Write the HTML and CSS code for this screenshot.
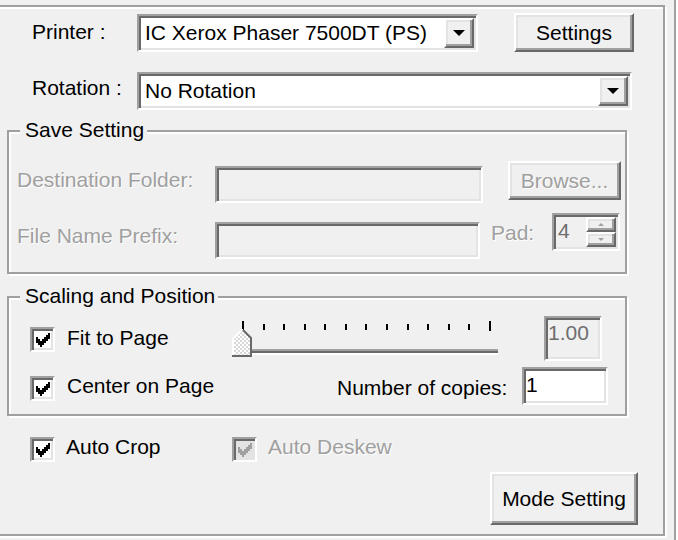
FILE: index.html
```html
<!DOCTYPE html>
<html lang="en">
<head>
  <meta charset="UTF-8" />
  <title>Print Setup</title>
  <link rel="stylesheet" href="styles.css">
</head>
<body>
  <div class="screen">
    <div class="frame">

      <div class="row row-printer">
        <span class="label lbl-printer">Printer :</span>
        <div class="combo combo-printer">
          <span class="combo-text">IC Xerox Phaser 7500DT (PS)</span>
          <span class="combo-btn"><i class="arrow"></i></span>
        </div>
        <button class="btn btn-settings">Settings</button>
      </div>

      <div class="row row-rotation">
        <span class="label lbl-rotation">Rotation :</span>
        <div class="combo combo-rotation">
          <span class="combo-text">No Rotation</span>
          <span class="combo-btn"><i class="arrow"></i></span>
        </div>
      </div>

      <div class="group group-save">
        <div class="group-title">Save Setting</div>
        <div class="row row-dest">
          <span class="label off lbl-dest">Destination Folder:</span>
          <div class="edit edit-dest"></div>
          <button class="btn btn-browse off">Browse...</button>
        </div>
        <div class="row row-prefix">
          <span class="label off lbl-prefix">File Name Prefix:</span>
          <div class="edit edit-prefix"></div>
          <span class="label off lbl-pad">Pad:</span>
          <div class="spin">
            <span class="spin-value">4</span>
            <span class="spin-btns">
              <span class="spin-btn"><i class="tri-up"></i></span>
              <span class="spin-btn"><i class="tri-down"></i></span>
            </span>
          </div>
        </div>
      </div>

      <div class="group group-scale">
        <div class="group-title">Scaling and Position</div>
        <div class="row row-fit">
          <div class="check check-fit">
            <span class="cb"><svg width="14" height="14" viewBox="0 0 7 7" shape-rendering="crispEdges"><path d="M0 2h1v3H0zM1 3h1v3H1zM2 4h1v3H2zM3 3h1v3H3zM4 2h1v3H4zM5 1h1v3H5zM6 0h1v3H6z" fill="#000"/></svg></span>
            <span class="label">Fit to Page</span>
          </div>
          <svg class="slider" width="272" height="42" viewBox="0 0 272 42" shape-rendering="crispEdges">
            <defs>
              <pattern id="dither" width="4" height="4" patternUnits="userSpaceOnUse">
                <rect width="4" height="4" fill="#ffffff"/>
                <rect width="2" height="2" fill="#d8d8d8"/>
                <rect x="2" y="2" width="2" height="2" fill="#d8d8d8"/>
              </pattern>
            </defs>
            <g fill="#000">
              <rect x="12" y="3" width="2" height="10"/>
              <rect x="33" y="6" width="2" height="6"/>
              <rect x="53" y="6" width="2" height="6"/>
              <rect x="74" y="6" width="2" height="6"/>
              <rect x="94" y="6" width="2" height="6"/>
              <rect x="115" y="6" width="2" height="6"/>
              <rect x="135" y="6" width="2" height="6"/>
              <rect x="156" y="6" width="2" height="6"/>
              <rect x="177" y="6" width="2" height="6"/>
              <rect x="197" y="6" width="2" height="6"/>
              <rect x="218" y="6" width="2" height="6"/>
              <rect x="238" y="6" width="2" height="6"/>
              <rect x="259" y="3" width="2" height="10"/>
            </g>
            <rect x="20" y="31" width="248" height="2" fill="#a0a0a0"/>
            <rect x="20" y="33" width="248" height="2" fill="#696969"/>
            <rect x="20" y="35" width="248" height="2" fill="#ffffff"/>
            <polygon points="2,21 12,11 22,21 22,39 2,39" fill="url(#dither)"/>
            <polyline points="3,38 3,21 12,12" fill="none" stroke="#ffffff" stroke-width="2" shape-rendering="auto"/>
            <polyline points="13,12 21,20 21,38 2,38" fill="none" stroke="#696969" stroke-width="2" shape-rendering="auto"/>
          </svg>
          <div class="edit edit-scale"><span class="gray-value">1.00</span></div>
        </div>
        <div class="row row-center">
          <div class="check check-center">
            <span class="cb"><svg width="14" height="14" viewBox="0 0 7 7" shape-rendering="crispEdges"><path d="M0 2h1v3H0zM1 3h1v3H1zM2 4h1v3H2zM3 3h1v3H3zM4 2h1v3H4zM5 1h1v3H5zM6 0h1v3H6z" fill="#000"/></svg></span>
            <span class="label">Center on Page</span>
          </div>
          <span class="label lbl-copies">Number of copies:</span>
          <div class="edit edit-copies"><span>1</span></div>
        </div>
      </div>

      <div class="row row-auto">
        <div class="check check-crop">
          <span class="cb"><svg width="14" height="14" viewBox="0 0 7 7" shape-rendering="crispEdges"><path d="M0 2h1v3H0zM1 3h1v3H1zM2 4h1v3H2zM3 3h1v3H3zM4 2h1v3H4zM5 1h1v3H5zM6 0h1v3H6z" fill="#000"/></svg></span>
          <span class="label">Auto Crop</span>
        </div>
        <div class="check check-deskew">
          <span class="cb cb-off"><svg width="14" height="14" viewBox="0 0 7 7" shape-rendering="crispEdges"><path d="M0 2h1v3H0zM1 3h1v3H1zM2 4h1v3H2zM3 3h1v3H3zM4 2h1v3H4zM5 1h1v3H5zM6 0h1v3H6z" fill="#a0a0a0"/></svg></span>
          <span class="label off">Auto Deskew</span>
        </div>
      </div>

      <div class="row row-mode">
        <button class="btn btn-mode">Mode Setting</button>
      </div>

    </div>
  </div>
</body>
</html>
```

FILE: styles.css
```css
* {
  box-sizing: border-box;
}

body {
  margin: 0;
  background: #f0f0f0;
  font-family: "Liberation Sans", Arial, sans-serif;
  font-size: 21px;
  color: #000;
}

.screen {
  width: 676px;
  height: 540px;
  padding-top: 5px;
  border-right: 2px solid #a0a0a0;
  box-shadow: 2px 0 0 #fff;
}

/* etched outer frame */
.frame {
  margin-left: -4px;
  width: 669px;
  height: 531px;
  border: 2px solid #a0a0a0;
  box-shadow: inset 2px 2px 0 #fff, 2px 2px 0 #fff;
}

.row {
  display: flex;
  align-items: flex-start;
}

.label {
  display: block;
  flex: none;
  height: 22px;
  line-height: 22px;
  white-space: nowrap;
}

.label.off {
  color: #a0a0a0;
  text-shadow: 1px 1px 0 #fff;
}

/* sunken and raised 3D edges */
.combo,
.edit,
.spin,
.cb {
  border: 2px solid;
  border-color: #a0a0a0 #fff #fff #a0a0a0;
  box-shadow: inset 2px 2px 0 #696969, inset -2px -2px 0 #e3e3e3;
}

.btn,
.combo-btn,
.spin-btn {
  border: 2px solid;
  border-color: #fff #696969 #696969 #fff;
  box-shadow: inset -2px -2px 0 #a0a0a0, inset 2px 2px 0 #e3e3e3;
  background: #f0f0f0;
}

.btn {
  flex: none;
  padding: 0;
  font-family: inherit;
  font-size: 21px;
  color: #000;
}

.btn.off {
  color: #a0a0a0;
  text-shadow: 1px 1px 0 #fff;
}

/* printer / rotation rows */
.row-printer {
  margin-top: 6px;
  padding-left: 34px;
  height: 40px;
}

.lbl-printer {
  width: 105px;
  margin-top: 8px;
}

.combo {
  display: flex;
  flex: none;
  height: 38px;
  padding: 2px;
  background: #fff;
}

.combo-text {
  flex: 1;
  padding-left: 4px;
  line-height: 30px;
  white-space: nowrap;
  overflow: hidden;
}

.combo-btn {
  width: 30px;
  display: flex;
  align-items: center;
  justify-content: center;
}

.arrow {
  width: 0;
  height: 0;
  border-left: 6px solid transparent;
  border-right: 6px solid transparent;
  border-top: 6px solid #000;
}

.combo-printer {
  width: 341px;
  margin-top: 1px;
}

.btn-settings {
  width: 120px;
  height: 39px;
  margin-left: 36px;
}

.row-rotation {
  margin-top: 19px;
  padding-left: 34px;
  height: 38px;
}

.lbl-rotation {
  width: 105px;
  margin-top: 5px;
}

.combo-rotation {
  width: 495px;
}

/* group boxes */
.group {
  margin-left: 9px;
  width: 620px;
  border: 2px solid #a0a0a0;
  box-shadow: inset 2px 2px 0 #fff, 2px 2px 0 #fff;
}

.group-title {
  width: fit-content;
  height: 22px;
  line-height: 22px;
  margin: -13px 0 0 11px;
  padding: 0 3px 0 5px;
  background: #f0f0f0;
}

.group-save {
  margin-top: 20px;
  height: 144px;
}

.group-save .row {
  padding-left: 8px;
}

.row-dest {
  margin-top: 20px;
  height: 52px;
}

.lbl-dest {
  width: 198px;
  margin-top: 8px;
}

.edit {
  flex: none;
  background: #f0f0f0;
}

.edit-dest {
  width: 268px;
  height: 37px;
  margin-top: 5px;
}

.btn-browse {
  width: 113px;
  height: 39px;
  margin-left: 25px;
}

.lbl-prefix {
  width: 198px;
  margin-top: 12px;
}

.edit-prefix {
  width: 265px;
  height: 37px;
  margin-top: 9px;
}

.lbl-pad {
  width: 61px;
  margin-left: 11px;
  margin-top: 9px;
}

.spin {
  display: flex;
  flex: none;
  width: 68px;
  height: 38px;
  padding: 2px;
  background: #f0f0f0;
}

.spin-value {
  flex: 1;
  padding: 3px 0 0 2px;
  line-height: 22px;
  color: #6d6d6d;
}

.spin-btns {
  display: flex;
  flex-direction: column;
  width: 30px;
}

.spin-btn {
  flex: 1;
  display: flex;
  align-items: center;
  justify-content: center;
}

.tri-up,
.tri-down {
  width: 0;
  height: 0;
  border-left: 3px solid transparent;
  border-right: 3px solid transparent;
}

.tri-up {
  border-bottom: 3px solid #a0a0a0;
}

.tri-down {
  border-top: 3px solid #a0a0a0;
}

/* scaling group */
.group-scale {
  margin-top: 22px;
  height: 120px;
}

.group-scale .row {
  padding-left: 21px;
}

.check {
  display: flex;
  align-items: flex-start;
  flex: none;
}

.cb {
  width: 25px;
  height: 25px;
  flex: none;
  display: flex;
  align-items: center;
  justify-content: center;
  background: #fff;
}

.cb-off {
  background: #e3e3e3;
}

.check .label {
  margin-left: 12px;
}

.row-fit {
  margin-top: 9px;
  height: 45px;
}

.check-fit {
  width: 200px;
  margin-top: 11px;
}

.slider {
  display: block;
  flex: none;
  margin-top: 2px;
}

.edit-scale {
  width: 58px;
  height: 45px;
  margin-left: 42px;
  padding: 4px 0 0 2px;
  line-height: 22px;
}

.gray-value {
  color: #6d6d6d;
}

.row-center {
  margin-top: 6px;
  height: 38px;
}

.check-center {
  width: 200px;
  margin-top: 9px;
}

.check-center .label {
  margin-top: -1px;
}

.lbl-copies {
  width: 185px;
  margin-left: 107px;
  margin-top: 10px;
}

.edit-copies {
  width: 86px;
  height: 38px;
  padding: 5px 0 0 2px;
  line-height: 22px;
  background: #fff;
}

/* bottom checkboxes and button */
.row-auto {
  margin-top: 20px;
  padding-left: 32px;
  height: 26px;
}

.check-crop {
  width: 202px;
  margin-top: 1px;
}

.check-crop .label,
.check-deskew .label {
  margin-left: 11px;
  margin-top: -1px;
}

.check-deskew {
  margin-top: 1px;
}

.row-mode {
  margin-top: 10px;
  padding-left: 492px;
}

.btn-mode {
  width: 148px;
  height: 53px;
}
```
